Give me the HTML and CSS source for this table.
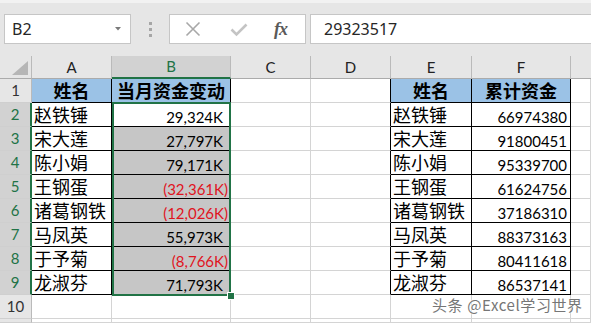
FILE: index.html
```html
<!DOCTYPE html>
<html lang="zh-CN">
<head>
<meta charset="utf-8">
<title>Excel</title>
<link rel="stylesheet" href="styles.css">
</head>
<body>
<div class="app">
  <header class="fbar">
    <div class="namebox">
      <span class="nb-text">B2</span>
      <svg class="nb-arrow" width="6" height="4" viewBox="0 0 6 4"><path d="M0 0H6L3 3.5Z" fill="#7a7a7a"/></svg>
    </div>
    <div class="grip"><i></i><i></i><i></i></div>
    <div class="fxbox">
      <svg class="ic-x" width="16" height="16" viewBox="0 0 16 16"><path d="M1.5 1.5L14.5 14.5M14.5 1.5L1.5 14.5" stroke="#a8a8a8" stroke-width="1.6" fill="none"/></svg>
      <svg class="ic-ok" width="18" height="14" viewBox="0 0 18 14"><path d="M1.5 6.5L6.5 11.5L16.5 1.5" stroke="#c4c4c4" stroke-width="2.6" fill="none"/></svg>
      <span class="ic-fx">fx</span>
    </div>
    <div class="valbox">29323517</div>
  </header>

  <div class="sheet">
    <div class="h corner"><svg width="16" height="14" viewBox="0 0 16 14"><path d="M16 0V14H0Z" fill="#b6b6b6"/></svg></div>
    <div class="h">A</div>
    <div class="h hs">B</div>
    <div class="h">C</div>
    <div class="h">D</div>
    <div class="h">E</div>
    <div class="h">F</div>
    <div class="h hlast"></div>

    <div class="rh">1</div>
    <div class="c t th"><span class="zh">姓名</span></div>
    <div class="c t th"><span class="zh">当月资金变动</span></div>
    <div class="c"></div>
    <div class="c bl"></div>
    <div class="c t th"><span class="zh">姓名</span></div>
    <div class="c t th"><span class="zh">累计资金</span></div>
    <div class="c"></div>

    <div class="rh rs">2</div>
    <div class="c t"><span class="zh">赵铁锤</span></div>
    <div class="c t num"><span class="n pos">29,324K</span></div>
    <div class="c"></div>
    <div class="c bl"></div>
    <div class="c t"><span class="zh">赵铁锤</span></div>
    <div class="c t num"><span class="n">66974380</span></div>
    <div class="c"></div>

    <div class="rh rs">3</div>
    <div class="c t"><span class="zh">宋大莲</span></div>
    <div class="c t num sh"><span class="n pos">27,797K</span></div>
    <div class="c"></div>
    <div class="c bl"></div>
    <div class="c t"><span class="zh">宋大莲</span></div>
    <div class="c t num"><span class="n">91800451</span></div>
    <div class="c"></div>

    <div class="rh rs">4</div>
    <div class="c t"><span class="zh">陈小娟</span></div>
    <div class="c t num sh"><span class="n pos">79,171K</span></div>
    <div class="c"></div>
    <div class="c bl"></div>
    <div class="c t"><span class="zh">陈小娟</span></div>
    <div class="c t num"><span class="n">95339700</span></div>
    <div class="c"></div>

    <div class="rh rs">5</div>
    <div class="c t"><span class="zh">王钢蛋</span></div>
    <div class="c t num sh"><span class="n neg">(32,361K)</span></div>
    <div class="c"></div>
    <div class="c bl"></div>
    <div class="c t"><span class="zh">王钢蛋</span></div>
    <div class="c t num"><span class="n">61624756</span></div>
    <div class="c"></div>

    <div class="rh rs">6</div>
    <div class="c t"><span class="zh">诸葛钢铁</span></div>
    <div class="c t num sh"><span class="n neg">(12,026K)</span></div>
    <div class="c"></div>
    <div class="c bl"></div>
    <div class="c t"><span class="zh">诸葛钢铁</span></div>
    <div class="c t num"><span class="n">37186310</span></div>
    <div class="c"></div>

    <div class="rh rs">7</div>
    <div class="c t"><span class="zh">马凤英</span></div>
    <div class="c t num sh"><span class="n pos">55,973K</span></div>
    <div class="c"></div>
    <div class="c bl"></div>
    <div class="c t"><span class="zh">马凤英</span></div>
    <div class="c t num"><span class="n">88373163</span></div>
    <div class="c"></div>

    <div class="rh rs">8</div>
    <div class="c t"><span class="zh">于予菊</span></div>
    <div class="c t num sh"><span class="n neg">(8,766K)</span></div>
    <div class="c"></div>
    <div class="c bl"></div>
    <div class="c t"><span class="zh">于予菊</span></div>
    <div class="c t num"><span class="n">80411618</span></div>
    <div class="c"></div>

    <div class="rh rs">9</div>
    <div class="c t"><span class="zh">龙淑芬</span></div>
    <div class="c t num sh"><span class="n pos">71,793K</span></div>
    <div class="c"></div>
    <div class="c bl"></div>
    <div class="c t"><span class="zh">龙淑芬</span></div>
    <div class="c t num"><span class="n">86537141</span></div>
    <div class="c"></div>

    <div class="rh">10</div>
    <div class="c"></div>
    <div class="c"></div>
    <div class="c"></div>
    <div class="c"></div>
    <div class="c"></div>
    <div class="c"></div>
    <div class="c"></div>

    <div class="rh"></div>
    <div class="c"></div>
    <div class="c"></div>
    <div class="c"></div>
    <div class="c"></div>
    <div class="c"></div>
    <div class="c"></div>
    <div class="c"></div>
  </div>

  <div class="sel"></div>
  <div class="handle"></div>
  <div class="wm">头条 @Excel学习世界</div>
</div>
</body>
</html>
```

FILE: styles.css
```css
* { box-sizing: border-box; }
html, body { margin: 0; padding: 0; }
body {
  width: 591px;
  height: 323px;
  overflow: hidden;
  background: #e6e6e6;
  font-family: Lato, "Noto Sans CJK SC", sans-serif;
  color: #000;
}
.app {
  position: relative;
  width: 591px;
  height: 323px;
  display: flex;
  flex-direction: column;
}

/* formula bar */
.fbar {
  height: 56px;
  flex: none;
  display: flex;
  align-items: flex-start;
  padding-left: 4px;
  padding-top: 11px;
  background: #e6e6e6;
  border-top: 3px solid #f2f2f2;
}
.namebox {
  width: 127px;
  height: 30px;
  background: #fff;
  border: 1px solid #c6c6c6;
  display: flex;
  align-items: center;
  justify-content: space-between;
  padding: 0 9px 0 7px;
  font-family: "Noto Sans", sans-serif;
  font-size: 16px;
  color: #262626;
}
.nb-text { line-height: 18px; }
.grip {
  width: 38px;
  height: 30px;
  display: flex;
  flex-direction: column;
  align-items: center;
  justify-content: center;
  gap: 3px;
}
.grip i {
  display: block;
  width: 3px;
  height: 3px;
  background: #a6a6a6;
}
.fxbox {
  width: 137px;
  height: 30px;
  background: #fff;
  border: 1px solid #c6c6c6;
  display: flex;
  align-items: center;
  padding-left: 15px;
}
.ic-x { margin-right: 29px; }
.ic-ok { margin-right: 26px; margin-top: 2px; }
.ic-fx {
  font-family: "Liberation Serif", serif;
  font-style: italic;
  font-weight: bold;
  font-size: 18px;
  line-height: 20px;
  color: #5a5a5a;
  letter-spacing: -1px;
}
.valbox {
  flex: 1;
  height: 30px;
  margin-left: 4px;
  background: #fff;
  border: 1px solid #c6c6c6;
  border-right: none;
  display: flex;
  align-items: center;
  padding-left: 13px;
  font-family: "Noto Sans", sans-serif;
  font-size: 16px;
  line-height: 18px;
  color: #262626;
}

/* sheet grid */
.sheet {
  flex: 1;
  display: grid;
  grid-template-columns: 32px 80px 119px 80px 80px 81px 99px 1fr;
  grid-template-rows: 23px repeat(10, 24px) 1fr;
  background: #fff;
}
.h {
  background: #e6e6e6;
  border-right: 1px solid #bababa;
  border-bottom: 1px solid #ababab;
  display: flex;
  align-items: center;
  justify-content: center;
  font-size: 15px;
  line-height: 15px;
  color: #222;
}
.corner {
  justify-content: flex-end;
  align-items: flex-end;
  padding: 0 3px 3px 0;
}
.hlast { border-right: none; }
.hs {
  background: #d2d2d2;
  color: #217346;
  border-bottom: 2px solid #217346;
}
.rh {
  background: #e6e6e6;
  border-right: 1px solid #bababa;
  border-bottom: 1px solid #cfcfcf;
  display: flex;
  align-items: center;
  justify-content: center;
  font-size: 15px;
  line-height: 15px;
  color: #333;
}
.rs {
  background: #d2d2d2;
  color: #217346;
  border-right: 2px solid #217346;
}

.c {
  background: #fff;
  border-right: 1px solid #d4d4d4;
  border-bottom: 1px solid #d4d4d4;
  display: flex;
  align-items: flex-end;
  white-space: nowrap;
  min-width: 0;
}
.t {
  border-right-color: #000;
  border-bottom-color: #000;
}
.bl { border-right-color: #000; }
.th {
  background: #9bc2e6;
  justify-content: center;
  font-weight: bold;
}
.sh { background: #c6c6c6; }
.zh {
  font-size: 18px;
  line-height: 18px;
  padding: 0 0 3px 2px;
  font-family: "Noto Sans CJK SC", sans-serif;
}
.th .zh { padding-left: 0; }
.num { justify-content: flex-end; }
.n {
  font-size: 15px;
  line-height: 15px;
  padding: 0 3px 1px 0;
}
.pos { padding-right: 7px; }
.neg { color: #e0141e; padding-right: 2px; }

/* overlays */
.sel {
  position: absolute;
  left: 112px;
  top: 102px;
  width: 119px;
  height: 194px;
  border: 2px solid #217346;
  pointer-events: none;
}
.handle {
  position: absolute;
  left: 227px;
  top: 292px;
  width: 8px;
  height: 8px;
  background: #217346;
  border: 1px solid #fff;
}
.wm {
  position: absolute;
  left: 432px;
  top: 296px;
  font-family: "Noto Sans CJK SC", sans-serif;
  font-size: 15px;
  line-height: 18px;
  color: #767676;
  letter-spacing: 0.6px;
  text-shadow: 0 0 2px #fff, 0 0 2px #fff, 0 0 1px #fff;
}
```
